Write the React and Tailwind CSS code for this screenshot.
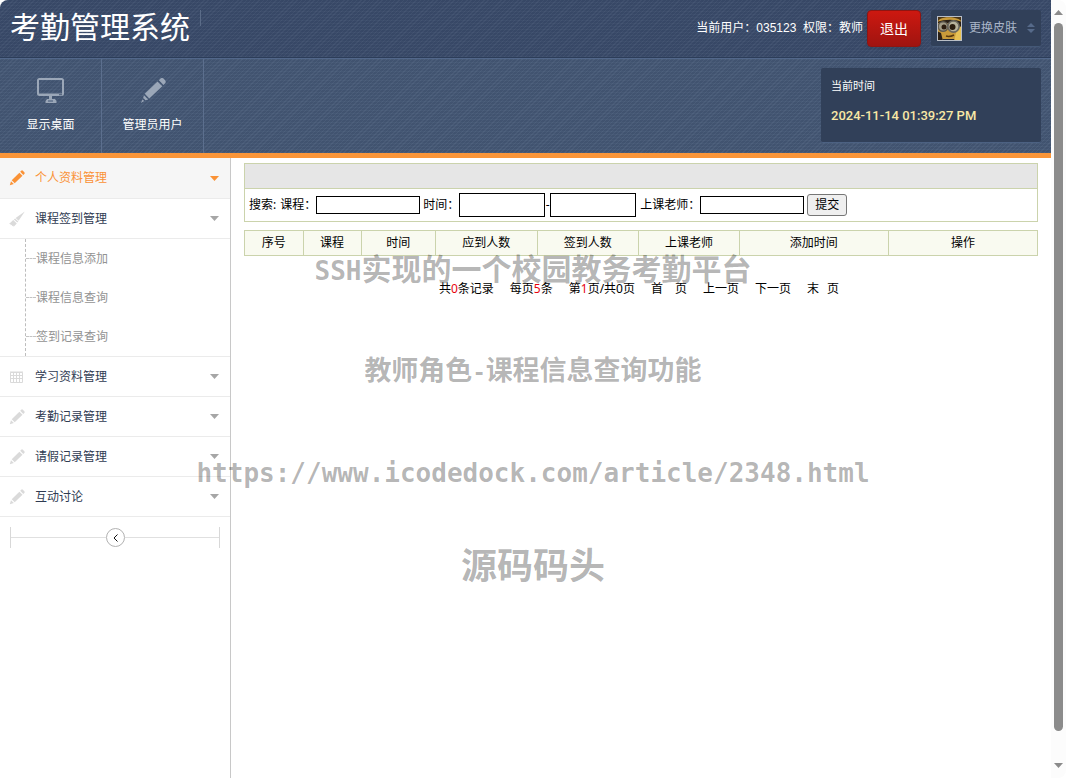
import React from 'react';
import clsx from 'clsx';

const menu = [
  { label: '个人资料管理', icon: 'edit', active: true },
  {
    label: '课程签到管理',
    icon: 'brush',
    children: ['课程信息添加', '课程信息查询', '签到记录查询'],
  },
  { label: '学习资料管理', icon: 'grid' },
  { label: '考勤记录管理', icon: 'pencil' },
  { label: '请假记录管理', icon: 'pencil' },
  { label: '互动讨论', icon: 'pencil' },
];

const columns = [
  { title: '序号', width: 'w-[7.4%]' },
  { title: '课程', width: 'w-[7.3%]' },
  { title: '时间', width: 'w-[9.4%]' },
  { title: '应到人数', width: 'w-[12.8%]' },
  { title: '签到人数', width: 'w-[12.8%]' },
  { title: '上课老师', width: 'w-[12.7%]' },
  { title: '添加时间', width: 'w-[18.8%]' },
  { title: '操作', width: 'w-[18.8%]' },
];

function MonitorIcon() {
  return (
    <svg viewBox="0 0 28 26" className="w-7 h-[26px]" aria-hidden="true">
      <path
        fill="#9ba7b8"
        fillRule="evenodd"
        d="M2.5 0h22A2.5 2.5 0 0 1 27 2.5v13a2.5 2.5 0 0 1-2.500 2.500h-22A2.500 2.500 0 0 1 0 15.500v-13A2.500 2.500 0 0 1 2.500 0zM2 2v13.500h23V2zM22 16.300v1h3v-1z"
      />
      <path fill="#9ba7b8" d="M12 18h3v3h3l1.500 2v2h-11v-2l1.500-2h2z" />
      <path fill="#445877" d="M11 22.500h5v1h-5z" />
    </svg>
  );
}

function BigPencilIcon() {
  return (
    <svg viewBox="0 0 26 26" className="w-[26px] h-[26px]" aria-hidden="true">
      <g fill="#9ba7b8">
        <path d="M20.200.8a2.500 2.500 0 0 1 3.500 0l1.200 1.300a2.500 2.500 0 0 1 0 3.500L23.500 6.900 18.900 2.200z" />
        <path d="M17.500 3.500l4.800 4.800L9.300 20.500l-4.600-4.700z" />
        <path d="M3.900 17.200l4.300 4.300-2.700.8-2.300-2.300z" />
        <path d="M2.600 21.500l1.600 1.600L.8 24.900z" />
      </g>
    </svg>
  );
}

function MenuIcon({ name }) {
  if (name === 'grid') {
    return (
      <svg viewBox="0 0 16 16" className="w-4 h-4" aria-hidden="true">
        <path
          fill="none"
          stroke="#dadada"
          d="M1.500 3.500h12v10h-12zM1.500 6.500h12M1.500 9.500h12M4.500 3v11M7.500 3v11M10.500 3v11M1 3h13"
        />
      </svg>
    );
  }
  if (name === 'brush') {
    return (
      <svg viewBox="0 0 16 16" className="w-4 h-4" fill="#dadada" aria-hidden="true">
        <path d="M15.800.5L9.600 9.800 6.600 7z" />
        <path d="M6.100 7.400l3.200 3-1.100 1.100-3.300-3z" />
        <path d="M4.200 9.100l3.600 3.300-3.100 3.300-.6-1.200-.8.700-.7-1.400-.8.400-.4-1.300L0 12.900z" />
      </svg>
    );
  }
  return (
    <svg
      viewBox="0 0 16 16"
      className="w-4 h-4"
      fill={name === 'edit' ? '#fa9236' : '#dadada'}
      aria-hidden="true"
    >
      <path d="M12.200.8a1.200 1.200 0 0 1 1.700 0l1.400 1.400a1.200 1.200 0 0 1 0 1.700l-1 1-3.100-3.100z" />
      <path d="M10.400 2.700l3.100 3.100-7.800 7.500-3-3.100z" />
      <path d="M2 11.200l2.800 2.900L.8 15.300z" />
    </svg>
  );
}

function Caret({ className }) {
  return (
    <svg viewBox="0 0 9 5" className={clsx('w-[9px] h-[5px]', className)} aria-hidden="true">
      <path fill="currentColor" d="M0 0h9L4.500 5z" />
    </svg>
  );
}

function Avatar() {
  return (
    <svg viewBox="0 0 25 25" className="w-[25px] h-[25px]" aria-hidden="true">
      <path fill="#4a3517" d="M0 0h25v25H0z" />
      <path fill="#c99b3a" d="M3 3c6-3 19-2 22 3v19H6l-6-9V6z" />
      <path fill="#e8c254" d="M20 13l5-3v15h-8z" />
      <path fill="#2b2117" d="M0 6c8-3 18-3 25 0v4l-3 1v-4H0zM0 15l4 2 2 8H0z" />
      <circle cx="6" cy="10.500" r="5.500" fill="#5e5a50" />
      <circle cx="6" cy="10.500" r="4" fill="#a39c86" />
      <circle cx="7" cy="11" r="2.500" fill="#2b1d10" />
      <circle cx="16.500" cy="10.500" r="6.500" fill="#6a675e" />
      <circle cx="16.500" cy="10.500" r="4.800" fill="#b8b29c" />
      <circle cx="15.500" cy="11" r="3" fill="#2b1d10" />
      <path fill="none" stroke="#59390d" strokeWidth="1.500" d="M9 20c3 1 6 0 8-1" />
      <path fill="#252a35" d="M5 25l1-2h11l1 2z" />
      <path fill="none" stroke="#b9bec6" strokeWidth="2" d="M0 0h25v25H0z" />
    </svg>
  );
}

function Header() {
  return (
    <header className="border-b-[5px] border-[#fa9538] text-white">
      <div className="bg-[#394b6a] bg-[repeating-linear-gradient(135deg,#ffffff09_0px,#ffffff09_1px,#00000006_1px,#00000006_3px),repeating-linear-gradient(0deg,#ffffff06_0px,#ffffff06_1px,#00000006_1px,#00000006_3px)] h-[58px] px-[10px] flex justify-between border-b border-[#2c3d59]">
        <div className="flex gap-[10px] pt-[10px]">
          <h1 className="text-[30px] leading-9">考勤管理系统</h1>
          <span className="w-px h-4 bg-[#5b6c88]" />
        </div>
        <div className="flex items-start pt-[10px]">
          <p className="mr-1 leading-9 whitespace-pre">当前用户：035123  权限：教师</p>
          <button
            type="button"
            className="mr-[10px] w-[54px] h-[37px] rounded-sm border border-[#8f1512] bg-linear-to-b from-[#cd1810] to-[#a01410] text-sm shadow-sm"
          >
            退出
          </button>
          <button
            type="button"
            className="flex items-center w-[110px] h-[37px] rounded-xs bg-[#314059] border-b border-[#445877] px-[6px] text-[#a9b5c8]"
          >
            <Avatar />
            <span className="ml-[7px]">更换皮肤</span>
            <svg viewBox="0 0 8 10" className="ml-auto w-2 h-[10px]" aria-hidden="true">
              <path fill="#566a8a" d="M0 4l4-4 4 4zM0 6h8l-4 4z" />
            </svg>
          </button>
        </div>
      </div>
      <div className="bg-[#445775] bg-[repeating-linear-gradient(135deg,#ffffff09_0px,#ffffff09_1px,#00000006_1px,#00000006_3px),repeating-linear-gradient(0deg,#ffffff06_0px,#ffffff06_1px,#00000006_1px,#00000006_3px)] h-[95px] pr-[10px] flex justify-between border-t border-[#52678a]">
        <nav className="flex">
          <a
            href="#desktop"
            className="w-[102px] pt-[19px] flex flex-col items-center gap-[11px] border-r border-[#5c6f8e]"
          >
            <MonitorIcon />
            <span className="leading-5">显示桌面</span>
          </a>
          <a
            href="#admin"
            className="w-[102px] pt-[19px] flex flex-col items-center gap-[11px] border-r border-[#5c6f8e]"
          >
            <BigPencilIcon />
            <span className="leading-5">管理员用户</span>
          </a>
        </nav>
        <div className="mt-[9px] w-[220px] h-[75px] rounded-xs bg-[#314059] border-b border-[#4c6182] pl-[10px] pt-2">
          <p className="text-[11px] leading-5">当前时间</p>
          <p className="mt-[10px] font-[Roboto] text-[13px] leading-5 font-medium text-[#f8e8a6]">
            2024-11-14 01:39:27 PM
          </p>
        </div>
      </div>
    </header>
  );
}

function Sidebar() {
  return (
    <aside className="w-[231px] shrink-0 border-r border-[#c8c8c8]">
      <ul>
        {menu.map((item) => (
          <li key={item.label} className="border-b border-[#ebebeb]">
            <a
              href="#menu"
              className={clsx(
                'flex items-center pl-[9px] pr-[11px]',
                item.active ? 'h-10 bg-[#f6f6f6] text-[#fa9236]' : 'h-[39px] text-[#2f3b52]'
              )}
            >
              <MenuIcon name={item.icon} />
              <span className="ml-[10px]">{item.label}</span>
              <Caret className={clsx('ml-auto', !item.active && 'text-[#a6a6a6]')} />
            </a>
            {item.children && (
              <div className="border-t border-[#ebebeb] pl-[25px]">
                <ul className="border-l border-dashed border-[#bdbdbd]">
                  {item.children.map((child) => (
                    <li key={child} className="h-[39px] flex items-center">
                      <span className="w-[10px] border-t border-dashed border-[#c4c4c4]" />
                      <a href="#sub" className="text-[#929292]">
                        {child}
                      </a>
                    </li>
                  ))}
                </ul>
              </div>
            )}
          </li>
        ))}
      </ul>
      <div className="mt-[10px] mx-[10px] h-[21px] flex items-center border-x border-[#d8d8d8]">
        <span className="flex-1 h-px bg-[#e0e0e0]" />
        <button
          type="button"
          aria-label="收起"
          className="w-[19px] h-[19px] rounded-full border border-[#b2b2b2] flex items-center justify-center"
        >
          <svg viewBox="0 0 5 8" className="w-[5px] h-2" aria-hidden="true">
            <path fill="none" stroke="#111" d="M4.500.5L1 4l3.500 3.500" />
          </svg>
        </button>
        <span className="flex-1 h-px bg-[#e0e0e0]" />
      </div>
    </aside>
  );
}

function Search() {
  return (
    <section className="border border-[#cbd3ac]">
      <div className="h-[25px] bg-[#e6e6e6] border-b border-[#cbd3ac]" />
      <form className="h-8 pl-1 flex items-center">
        <span className="mr-1">搜索:</span>
        <label htmlFor="course">课程：</label>
        <input id="course" className="w-[104px] h-[18px] px-1 border border-black" />
        <label htmlFor="from" className="ml-[3px]">时间：</label>
        <input id="from" className="w-[86px] h-6 px-1 border border-black" />
        <label htmlFor="to" className="w-[5px] text-center">-</label>
        <input id="to" className="w-[86px] h-6 px-1 border border-black" />
        <label htmlFor="teacher" className="ml-1">上课老师：</label>
        <input id="teacher" className="w-[104px] h-[18px] px-1 border border-black" />
        <button
          type="button"
          className="ml-[3px] w-10 h-[22px] rounded-[3px] border border-[#767676] bg-[#efefef]"
        >
          提交
        </button>
      </form>
    </section>
  );
}

function Pager() {
  return (
    <div className="mt-[23px] flex justify-center gap-4 leading-5 pr-1">
      <span>共<span className="text-red-600">0</span>条记录</span>
      <span>每页<span className="text-red-600">5</span>条</span>
      <span>第<span className="text-red-600">1</span>页/共0页</span>
      <a href="#first" className="flex gap-3"><span>首</span><span>页</span></a>
      <a href="#prev">上一页</a>
      <a href="#next">下一页</a>
      <a href="#last" className="flex gap-2"><span>末</span><span>页</span></a>
    </div>
  );
}

function Scrollbar() {
  return (
    <div className="w-[15px] shrink-0 bg-[#fcfcfc] flex flex-col items-center pt-[10px] pb-[10px]">
      <Caret className="rotate-180 text-[#8b8b8b]" />
      <span className="mt-2 mb-8 w-[9px] flex-1 rounded-full bg-[#8b8b8b]" />
      <Caret className="text-[#8b8b8b]" />
    </div>
  );
}

function Watermark() {
  return (
    <div className="pointer-events-none absolute inset-x-0 top-[250px] flex flex-col items-center font-bold text-black/30 whitespace-nowrap">
      <p className="text-[30px] leading-10">
        <span className="font-['DejaVu_Sans_Mono'] text-[26px]">SSH</span>实现的一个校园教务考勤平台
      </p>
      <p className="mt-[60px] text-[27px] leading-10">
        教师角色<span className="font-['DejaVu_Sans_Mono'] text-[22px]">-</span>课程信息查询功能
      </p>
      <p className="mt-[60px] font-['DejaVu_Sans_Mono'] text-[26px] leading-10">
        https://www.icodedock.com/article/2348.html
      </p>
      <p className="mt-[54px] text-4xl leading-10">源码码头</p>
    </div>
  );
}

export default function App() {
  return (
    <div className="relative min-h-screen flex overflow-hidden rounded-lg bg-white text-xs text-black font-['Liberation_Sans','Noto_Sans_CJK_SC',sans-serif]">
      <div className="flex-1 min-w-0 flex flex-col">
        <Header />
        <div className="flex-1 flex">
          <Sidebar />
          <main className="flex-1 min-w-0 px-[13px] pt-[5px] font-['Noto_Sans','Noto_Sans_CJK_SC',sans-serif]">
            <Search />
            <table className="mt-2 w-full table-fixed border-collapse">
              <thead>
                <tr className="h-[25px] bg-[#f9faf0]">
                  {columns.map((col) => (
                    <th key={col.title} className={clsx('border border-[#cbd3ac] font-normal', col.width)}>
                      {col.title}
                    </th>
                  ))}
                </tr>
              </thead>
            </table>
            <Pager />
          </main>
        </div>
      </div>
      <Scrollbar />
      <Watermark />
    </div>
  );
}
